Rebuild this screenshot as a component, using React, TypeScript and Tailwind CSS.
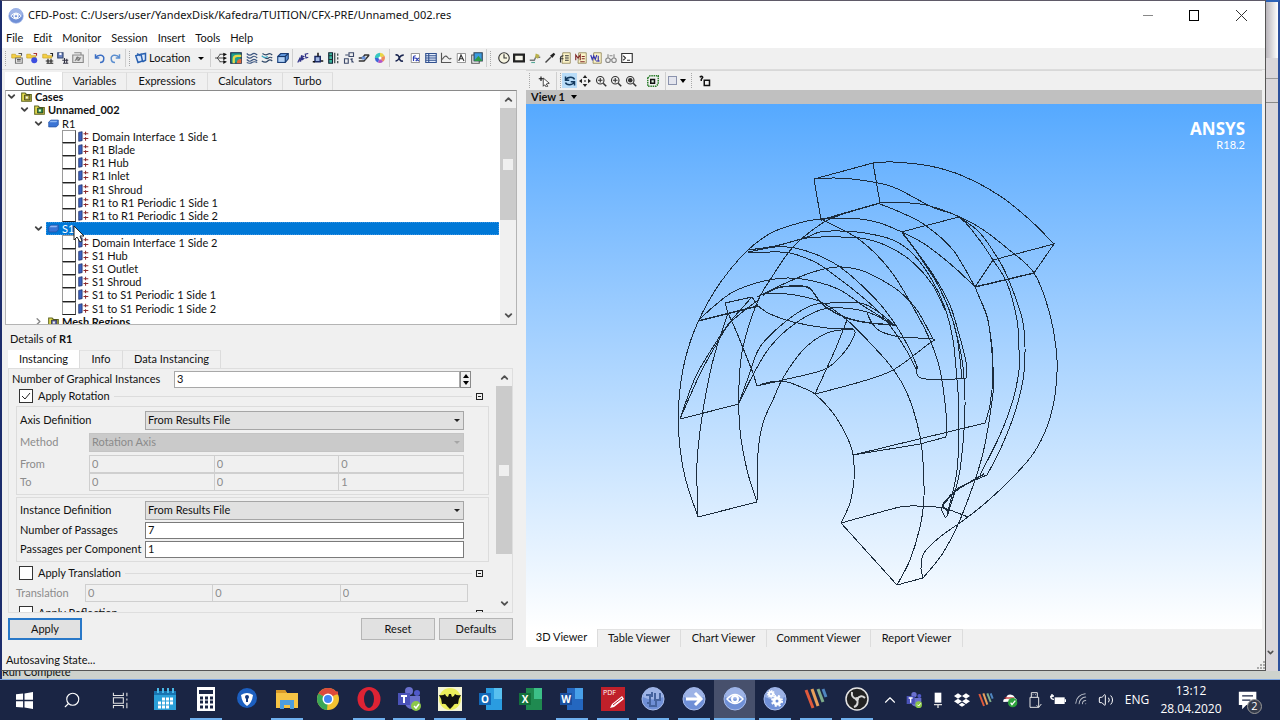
import React from 'react';
import { ChevronDown, ChevronRight, ChevronUp, Search, Wifi, Volume2 } from 'lucide-react';

type Pt = [number, number];

// Turns a list of points into a smooth cubic path
const smooth = (pts: Pt[]) => {
  let d = `M${pts[0][0]} ${pts[0][1]}`;
  for (let i = 0; i < pts.length - 1; i++) {
    const a = pts[Math.max(i - 1, 0)];
    const b = pts[i];
    const c = pts[i + 1];
    const e = pts[Math.min(i + 2, pts.length - 1)];
    d += `C${b[0] + (c[0] - a[0]) / 6} ${b[1] + (c[1] - a[1]) / 6} ${c[0] - (e[0] - b[0]) / 6} ${c[1] - (e[1] - b[1]) / 6} ${c[0]} ${c[1]}`;
  }
  return d;
};

const curves: Pt[][] = [
  [[873, 163], [893, 162], [930, 166], [963, 176], [1000, 196], [1030, 220], [1054, 244]],
  [[814, 179], [835, 178], [860, 180], [893, 187], [932, 207], [959, 217], [978, 238], [993, 260], [1007, 283], [1017, 320], [1019, 350], [1019, 370], [1013, 400], [1000, 435], [980, 475]],
  [[959, 217], [980, 233], [1000, 262], [1010, 283], [1022, 318], [1025, 347], [1023, 380], [1014, 415], [1000, 450], [987, 475]],
  [[880, 203], [910, 203], [930, 206], [960, 217], [982, 229], [1008, 249], [1034, 273], [1050, 315], [1057, 360], [1055, 395], [1047, 427], [1033, 454], [1013, 477], [990, 499], [968, 517], [940, 537], [924, 553], [921, 568], [923, 578]],
  [[880, 204], [902, 213], [925, 225], [953, 250], [975, 287]],
  [[902, 232], [918, 240], [933, 250], [955, 268], [975, 287]],
  [[902, 232], [920, 257], [938, 285], [950, 312], [958, 340], [963, 367], [965, 400], [964, 430], [960, 470], [955, 492], [948, 513]],
  [[903, 233], [932, 273], [949, 303], [957, 327], [966, 362], [966, 378]],
  [[903, 234], [930, 271], [948, 307], [957, 337], [962, 378]],
  [[975, 287], [987, 317], [992, 347], [993, 375], [990, 405], [985, 423]],
  [[976, 290], [988, 320], [993, 367], [993, 393], [982, 457], [960, 520], [943, 553], [923, 578]],
  [[823, 220], [860, 240], [890, 270], [913, 307], [930, 340], [940, 370], [946, 413], [946, 437]],
  [[902, 232], [880, 223], [860, 219], [840, 218], [821, 219], [803, 222], [773, 232], [748, 250], [720, 283], [698, 322], [685, 360], [679, 400], [679, 437], [685, 477], [698, 517]],
  [[840, 215], [821, 224], [793, 247], [770, 280], [757, 303], [743, 347], [739, 385], [740, 430], [747, 470], [757, 502]],
  [[748, 252], [780, 245], [807, 237], [820, 232], [840, 231], [865, 233], [893, 240], [913, 254], [932, 280], [945, 308], [953, 340], [957, 380], [959, 413], [957, 470], [947, 515]],
  [[748, 250], [775, 246], [807, 238], [830, 237], [860, 238], [885, 245], [910, 260], [932, 284], [945, 310]],
  [[748, 252], [775, 247], [795, 248], [815, 254], [837, 265], [857, 281], [880, 304], [897, 327], [910, 350], [918, 369]],
  [[748, 253], [770, 252], [790, 253], [815, 262], [837, 277], [860, 295], [880, 313], [896, 334], [908, 353], [916, 369]],
  [[698, 321], [713, 307], [733, 292], [760, 282], [787, 278], [813, 281], [840, 290], [865, 307], [893, 324]],
  [[757, 386], [770, 382], [787, 382], [803, 388], [815, 394], [833, 413], [847, 437], [853, 455], [854, 480], [850, 503], [841, 523]],
  [[841, 523], [870, 515], [900, 507], [917, 506], [943, 508], [968, 517]],
  [[897, 585], [910, 560], [920, 527], [924, 497], [922, 450], [917, 423], [907, 393], [893, 369], [873, 346], [847, 320], [823, 303], [805, 297], [787, 294], [763, 294]],
  [[758, 306], [770, 314], [793, 322], [827, 328], [853, 329], [852, 340], [840, 357], [823, 370], [783, 380], [757, 386]],
  [[867, 313], [872, 323], [880, 331], [900, 337], [933, 339], [927, 345], [893, 370], [860, 382], [815, 394]],
  [[933, 339], [917, 310], [900, 292], [880, 279], [860, 270], [837, 267], [810, 273], [777, 287], [757, 297]],
  [[853, 329], [827, 333], [803, 350], [783, 378], [773, 400], [763, 423], [758, 453], [757, 502]],
  [[739, 403], [748, 378], [760, 347], [785, 322], [810, 306], [830, 303], [860, 303], [877, 311], [893, 324]],
  [[739, 403], [754, 373], [770, 347], [793, 325], [820, 310], [843, 308], [870, 313], [893, 325]],
  [[680, 419], [695, 378], [713, 347], [730, 322], [752, 297]],
  [[680, 419], [700, 374], [716, 345], [731, 322], [758, 300]],
  [[728, 313], [715, 353], [709, 378], [702, 417], [697, 463], [698, 517]],
  [[916, 367], [917, 374], [921, 378], [940, 380], [966, 378]],
  [[987, 475], [960, 487], [950, 497], [942, 507], [943, 513], [947, 516], [955, 490]],
];

const heavy: Pt[][] = [
  [[763, 295], [777, 288], [793, 286], [807, 287], [813, 292], [823, 305], [847, 318], [870, 323], [895, 325]],
  [[984, 474], [960, 488], [951, 495], [943, 505], [948, 511]],
];

const segments =
  'M814 179L873 163L880 203M814 179L821 220M993 260L1054 244L1034 273M993 260L975 287M901 232L959 217' +
  'M853 455L985 423M853 455L920 444L946 437M698 517L757 502M841 523L897 585L923 578M680 419L739 404' +
  'M758 306L752 297L725 303L728 313L737 333L753 373L757 386M847 320L836 348L815 394';

const Wireframe = () => (
  <svg viewBox="526 104 736 525" preserveAspectRatio="xMidYMin meet" className="block h-full w-full" fill="none" stroke="#1c2c3c" strokeWidth="1" shapeRendering="crispEdges">
    {curves.map((c, i) => <path key={i} d={smooth(c)} />)}
    {heavy.map((c, i) => <path key={i} d={smooth(c)} strokeWidth="1.4" />)}
    <path d={segments} />
    <path d="M821 220L880 203M975 287L1034 273M698 321L758 306" strokeWidth="1.4" />
  </svg>
);

const Ico: React.FC<{ children: React.ReactNode; className?: string }> = ({ children, className = 'h-[12px] w-[12px]' }) => (
  <svg viewBox="0 0 16 16" className={`shrink-0 ${className}`} fill="none" strokeWidth="1.5">{children}</svg>
);

const folder = <path d="M1 3h5l1 2h6v3H1z" fill="#f5cf45" stroke="#c9a52c" strokeWidth="1" />;
const sheet = <path d="M3 2h11v12H3z" fill="#fff" stroke="#777" strokeWidth="1" />;

const fileIcons = [
  <>{folder}<path d="M6 8h9v7H6z" fill="#eee" stroke="#777" /><path d="M8 10h5M8 12h5M10 2h4v3" stroke="#555" /></>,
  <>{folder}<circle cx="11" cy="11" r="4" fill="#3d4ee0" /><path d="M10 2h4v3" stroke="#a33" /></>,
  <>{folder}<path d="M5 12h10M6 15h9M8 9v6M12 9v6M11 2h3v4" stroke="#222" /></>,
  <><path d="M1 1h7v7H1z" fill="#6e86c4" stroke="#33466f" /><path d="M3 1h3v3H3z" fill="#fff" /><path d="M7 11h8M8 15h7M10 8v7M13 9v6" stroke="#334" /></>,
  <><path d="M1 4h14v10H1z" fill="#e2e2e2" stroke="#888" /><path d="M3 1h9v3M4 12l3-5 2 4 3-4" stroke="#888" /><circle cx="8" cy="9" r="2" stroke="#777" /></>,
];
const undoIcons = [
  <path d="M2 3v5h5M2 8c4-6 12-4 11 1 0 3-2 5-5 5" stroke="#3c6fc4" strokeWidth="2" />,
  <path d="M14 3v5H9M14 8C10 2 2 4 3 9c0 3 2 5 5 5" stroke="#5c8fd0" strokeWidth="2" />,
];
const locationIcon = <path d="M1 5l7-2 2 9-6 2zM8 3l6-1v9l-4 2M3 2l4 3" fill="#dbe8fb" stroke="#2a61b0" strokeWidth="2" />;
const plotIcons = [
  <><path d="M0 8h12M6 3h6M6 13h6M3 8l4-5M3 8l4 5" stroke="#222" strokeWidth="1" /><path d="M11 1l5 2-5 3zM11 6l5 2-5 3zM11 11l5 2-5 3z" fill="#111" /></>,
  <><path d="M1 1h14v14H1z" fill="#1f9e8f" stroke="#124" /><path d="M5 15V9q0-4 5-4h5" stroke="#e7d94a" strokeWidth="3" /><path d="M9 15q0-6 6-6v6z" fill="#e06a3a" /></>,
  <path d="M1 2q4 4 7 1t7 1M1 6q4 4 7 1t7 1M1 10q4 4 7 1t7 1M1 14q4 2 7 0t7 0" stroke="#3c5680" />,
  <><path d="M2 2q4 3 7 1t6 1M4 7q4 3 6 1t5 0M1 12q5 3 8 0t6 0" stroke="#2e4666" /><path d="M1 5q4 4 8 1" stroke="#34a4c0" /></>,
  <><path d="M1 6l4-4h10v7l-4 5H1z" fill="#5d93d8" stroke="#1c3f78" /><path d="M1 6h10l4-4M11 6v8" stroke="#173666" /><path d="M2 7h8v6H2z" fill="#b4d0f1" /></>,
];
const insertIcons = [
  <path d="M1 14l3-6 1 5M2 12h3M6 11V5l3 1-3 2 3 1-3 2M15 2l-4 1 1 5 3-1" stroke="#2d2f86" />,
  <><path d="M4 6h7v7H4z" fill="#9fb6e2" stroke="#1c2b66" strokeWidth="2" /><path d="M1 13h3M8 1v5M12 12h3" stroke="#111" strokeWidth="2" /></>,
  <><path d="M1 1h5v14H1z" fill="#3ab89f" stroke="#123" /><path d="M1 5h5M1 10h5M9 1v14M13 2v3M13 7v3M13 12v3" stroke="#233" /></>,
  <path d="M2 15V9h5v6zM8 1h6v5H8zM3 4h4M10 9l4 5M12 8v6" stroke="#3d4a6a" />,
  <><path d="M1 8h5l3-4h6M1 12h7l7-8" stroke="#333" strokeWidth="2" /><path d="M5 6h5v4H5z" fill="#6991d8" /></>,
  <><path d="M8 8V1a7 7 0 0 1 6 4z" fill="#e8d548" /><path d="M8 8l6-3a7 7 0 0 1-2 8z" fill="#ef8b5c" /><path d="M8 8l4 5a7 7 0 0 1-7 1z" fill="#b455c4" /><path d="M8 8l-3 6a7 7 0 0 1-4-6z" fill="#3c66d8" /><path d="M8 8H1a7 7 0 0 1 7-7z" fill="#3ac8c0" /><circle cx="8" cy="8" r="2" fill="#fff" /></>,
];
const dataIcons = [
  <path d="M2 4q4-1 5 4t5 4M13 4q-4 0-6 4t-5 4" stroke="#1a2550" strokeWidth="2" />,
  <>{sheet}<path d="M6 12V7q0-2 3-2M5 8h4M9 8l4 4M13 8l-4 4" stroke="#2a3bb0" /></>,
  <><path d="M1 2h14v12H1z" fill="#e5edfb" stroke="#31518f" /><path d="M1 5h14M1 8h14M1 11h14M5 2v12" stroke="#31518f" /></>,
  <path d="M2 1v13h13M3 10q4-7 7-3t5 1" stroke="#555" />,
  <>{sheet}<path d="M5 12l3-8 4 8M6 9h5" stroke="#333" /></>,
  <><path d="M1 4h10v11H1z" fill="#fff" stroke="#555" /><path d="M4 1h11v11H4z" fill="#3b9be0" stroke="#345" /><path d="M4 12l6-7 5 7z" fill="#2e9b48" /></>,
];
const calcSheet = <path d="M5 1h10v14H4z" fill="#fbf3c8" stroke="#86794a" strokeWidth="1" />;
const toolIcons = [
  <><circle cx="8" cy="8" r="7" fill="#f6f4e0" stroke="#333" /><path d="M8 3v5h4" stroke="#333" /></>,
  <><path d="M0 2h16v12H0z" fill="#222" /><path d="M3 5h10v6H3z" fill="#f4f4ea" /></>,
  <><path d="M1 11h6l2-4h6" stroke="#777" strokeWidth="2" /><path d="M9 2l5 2-2 5-4-2z" fill="#b8b04c" /><path d="M3 14h5" stroke="#5a9" /></>,
  <><path d="M2 14l7-7" stroke="#444" strokeWidth="2" /><path d="M8 5l3 3 4-5-2-2z" fill="#222" /></>,
  <>{calcSheet}<path d="M2 14V8q0-3 4-3M1 9h5M8 5h5M8 8h5M8 11h5" stroke="#333" /></>,
  <>{calcSheet}<path d="M1 11V4l3 4 3-4v7M9 6h4M9 9h4M7 13h6" stroke="#802828" /></>,
  <>{calcSheet}<path d="M1 4l2 6 2-5 2 5 2-6M8 12h5M11 5v8" stroke="#3333b0" /></>,
  <><circle cx="4" cy="11" r="3" stroke="#888" /><circle cx="12" cy="11" r="3" stroke="#888" /><path d="M4 8V3M12 8V3M7 10h2M6 5h4" stroke="#888" /></>,
  <><path d="M1 2h14v12H1z" fill="#fff" stroke="#333" /><path d="M3 5l3 3-3 3M8 11h4" stroke="#333" /></>,
];
const magnifier = <><circle cx="7" cy="7" r="5" stroke="#333" /><path d="M11 11l4 4" stroke="#333" strokeWidth="2" /></>;
const viewIcons = [
  <path d="M2 2v5h5M2 7q2-4 7-4 4 0 5 3M14 14V9H9M14 9q-2 4-7 4-4 0-5-3" stroke="#12395e" strokeWidth="2" />,
  <path d="M8 0l3 4H5zM8 16l3-4H5zM0 8l4-3v6zM16 8l-4-3v6zM7 7h2v2H7z" fill="#222" />,
  <>{magnifier}<path d="M4 7h6M7 4v6" stroke="#333" /></>,
  <>{magnifier}<path d="M4 7h6M7 4v6" stroke="#333" /></>,
  <>{magnifier}<circle cx="7" cy="7" r="3" fill="#333" /></>,
];

const Group: React.FC<{ icons: React.ReactNode[]; name: string; className: string }> = ({ icons, name, className }) => (
  <div className={`flex shrink-0 ${className}`}>
    {icons.map((icon, i) => (
      <button key={i} aria-label={`${name} ${i + 1}`} className="flex flex-1 items-center justify-center">
        <Ico>{icon}</Ico>
      </button>
    ))}
  </div>
);

const Sep = () => <span className="mx-[2px] h-[18px] w-px shrink-0 bg-[#cfcfcf]" />;
const Grip = () => <span className="mx-px h-[15px] shrink-0 border-l border-dotted border-[#a8a8a8]" />;

const Tab: React.FC<{ label: string; active?: boolean; className?: string }> = ({ label, active, className = '' }) => (
  <button
    role="tab"
    aria-selected={!!active}
    className={`h-full shrink-0 border-r border-[#dcdcdc] text-center ${active ? 'bg-white' : 'border-t border-t-[#e2e2e2]'} ${className}`}
  >
    {label}
  </button>
);

const boundary = (
  <Ico className="mr-[3px] ml-[2px] h-[11px] w-[11px]">
    <path d="M1 2l5-1v13l-5 1z" fill="#3b62c0" stroke="#14255c" strokeWidth="1" />
    <path d="M8 4h7M8 11h7M11 1v5M11 9v5" stroke="#8d2a2a" />
  </Ico>
);
const solid = (
  <Ico className="mr-[3px] h-[11px] w-[11px]">
    <path d="M1 6l3-3h11v7l-3 3H1z" fill="#3b74d4" stroke="#2450a0" strokeWidth="1" />
    <path d="M4 4h10l-2 2H2z" fill="#8eb6f2" />
  </Ico>
);
const caseIcon = (fill: string) => (
  <Ico className="mr-[3px] h-[11px] w-[11px]">
    <path d="M1 3h5l2 2h7v10H1z" fill="#e8df4e" stroke="#5d6420" />
    <path d="M5 6h8v7H5z" fill={fill} stroke="#222" strokeWidth="1" />
    <path d="M7 8h3v3H7z" fill="#f7f7e0" />
  </Ico>
);

const Leaf: React.FC<{ label: string }> = ({ label }) => (
  <label className="flex items-center pl-[56px]">
    <input type="checkbox" className="h-full w-[14px] appearance-none border border-[#9a9a9a] border-b-[#222] border-r-[#555] bg-white" />
    {boundary}
    {label}
  </label>
);

const r1 = ['Domain Interface 1 Side 1', 'R1 Blade', 'R1 Hub', 'R1 Inlet', 'R1 Shroud', 'R1 to R1 Periodic 1 Side 1', 'R1 to R1 Periodic 1 Side 2'];
const s1 = ['Domain Interface 1 Side 2', 'S1 Hub', 'S1 Outlet', 'S1 Shroud', 'S1 to S1 Periodic 1 Side 1', 'S1 to S1 Periodic 1 Side 2'];
const arrow = <ChevronDown className="mr-[4px] h-[11px] w-[11px] shrink-0" strokeWidth={4} color="#444" />;

const Scrollbar: React.FC<{ thumb: string }> = ({ thumb }) => (
  <div className="flex w-[16px] shrink-0 flex-col items-center bg-[#f0f0f0]">
    <ChevronUp className="my-[3px] h-[11px] w-[11px] shrink-0" strokeWidth={4} color="#505050" />
    <div className={`flex w-full items-center justify-center bg-[#cbcbcb] ${thumb}`}>
      <span className="h-[11px] w-[10px] bg-[#efefef]" />
    </div>
    <ChevronDown className="mt-auto mb-[3px] h-[11px] w-[11px] shrink-0" strokeWidth={4} color="#505050" />
  </div>
);

const Tree = () => (
  <div className="flex min-h-0 flex-1 overflow-hidden border border-[#b4b4b4] border-t-[#8a8a8a] bg-white">
    <div className="min-h-0 flex-1 overflow-hidden">
      <div className="-mt-[1px] grid h-[238px] auto-rows-fr leading-[13px]">
        <div className="flex items-center font-bold">{arrow}{caseIcon('#a9a13c')}Cases</div>
        <div className="flex items-center pl-[13px] font-bold">{arrow}{caseIcon('#2c8c46')}Unnamed_002</div>
        <div className="flex items-center pl-[27px]">{arrow}{solid}R1</div>
        {r1.map((l) => <Leaf key={l} label={l} />)}
        <div className="flex items-center pl-[27px]">
          {arrow}
          <div className="relative mr-[1px] -ml-[2px] flex h-full flex-1 items-center border border-dotted border-[#3a95e4] bg-[#0078d7] pl-[1px] text-white">
            {solid}S1
            <svg viewBox="0 0 12 18" className="absolute top-[2px] left-[26px] z-10 h-[18px] w-[12px]">
              <path d="M1 1v14l3-3 3 5 2-1-2-5h4z" fill="#fff" stroke="#222" />
            </svg>
          </div>
        </div>
        {s1.map((l) => <Leaf key={l} label={l} />)}
        <div className="flex items-center pl-[27px] font-bold">
          <ChevronRight className="mr-[4px] h-[11px] w-[11px]" strokeWidth={3} color="#888" />
          {caseIcon('#5c63a8')}Mesh Regions
        </div>
      </div>
    </div>
    <Scrollbar thumb="h-[112px]" />
  </div>
);

const Drop: React.FC<{ id: string; value: string; disabled?: boolean }> = ({ id, value, disabled }) => (
  <div className="relative flex-1">
    <select
      id={id}
      disabled={disabled}
      className={`block h-[19px] w-full appearance-none border px-[2px] ${disabled ? 'border-[#c4c4c4] bg-[#cacaca] text-[#8a8a8a]' : 'border-[#a6a6a6] bg-[#e1e1e1]'}`}
    >
      <option>{value}</option>
    </select>
    <span className={`pointer-events-none absolute top-[8px] right-[4px] border-x-[3px] border-t-[3px] border-x-transparent ${disabled ? 'border-t-[#a5a5a5]' : 'border-t-[#222]'}`} />
  </div>
);

const Triple: React.FC<{ label: string; values: string[]; labelClass: string }> = ({ label, values, labelClass }) => (
  <div className="flex h-[18px] items-center text-[#8c8c8c]">
    <span className={`shrink-0 ${labelClass}`}>{label}</span>
    {values.map((v, i) => (
      <input key={i} aria-label={`${label} ${i + 1}`} disabled defaultValue={v} className="h-full w-0 flex-1 border border-r-0 border-[#cfcfcf] bg-[#f0f0f0] px-[2px] pb-[2px] last:border-r" />
    ))}
  </div>
);

const Toggle: React.FC<{ label: string; checked?: boolean }> = ({ label, checked }) => (
  <div className="flex h-[16px] items-center gap-[4px] pr-[6px] pl-[3px]">
    <label className="flex items-center gap-[5px]">
      <span className="relative h-[14px] w-[14px]">
        <input type="checkbox" defaultChecked={checked} className="block h-full w-full appearance-none border border-[#333] bg-white" />
        {checked && <svg viewBox="0 0 14 14" className="pointer-events-none absolute inset-0"><path d="M3 7l3 3 5-6" fill="none" stroke="#222" /></svg>}
      </span>
      {label}
    </label>
    <span className="h-px flex-1 bg-[#dcdcdc]" />
    <button aria-label={`Collapse ${label}`} className="flex h-[7px] w-[7px] items-center justify-center border border-[#222]">
      <span className="h-px w-[3px] bg-[#222]" />
    </button>
  </div>
);

const Details = () => (
  <div className="shrink-0 pt-[7px] pr-[4px] pb-[7px] pl-[3px]">
    <div className="pl-[2px] leading-[14px]">Details of <b>R1</b></div>
    <div role="tablist" className="mt-[4px] flex h-[18px]">
      <Tab label="Instancing" active className="w-[72px]" />
      <Tab label="Info" className="w-[43px]" />
      <Tab label="Data Instancing" className="w-[98px]" />
    </div>
    <div className="flex h-[245px] overflow-hidden border border-[#dedede]">
      <div className="min-w-0 flex-1 overflow-hidden pt-[2px] pr-[7px] pl-[3px]">
        <div className="flex h-[17px] items-center pr-[18px]">
          <label htmlFor="instances" className="w-[162px] shrink-0">Number of Graphical Instances</label>
          <input id="instances" defaultValue="3" className="h-full w-0 flex-1 border border-[#a8a8a8] bg-white px-[2px] pb-[2px]" />
          <div className="flex h-full w-[11px] flex-col border border-[#8a8a8a] bg-[#f0f0f0]">
            <button aria-label="More" className="flex flex-1 items-center justify-center"><span className="border-x-[3px] border-b-[4px] border-x-transparent border-b-black" /></button>
            <button aria-label="Fewer" className="flex flex-1 items-center justify-center"><span className="border-x-[3px] border-t-[4px] border-x-transparent border-t-black" /></button>
          </div>
        </div>
        <div className="pl-[4px]">
          <Toggle label="Apply Rotation" checked />
          <div className="mt-[2px] flex flex-col gap-[3px] border border-[#dcdcdc] pt-[4px] pr-[24px] pb-[3px] pl-[3px]">
            <div className="flex items-center"><label htmlFor="axis" className="w-[125px]">Axis Definition</label><Drop id="axis" value="From Results File" /></div>
            <div className="flex items-center text-[#8c8c8c]"><label htmlFor="method" className="w-[69px]">Method</label><Drop id="method" value="Rotation Axis" disabled /></div>
            <div>
              <Triple label="From" values={['0', '0', '0']} labelClass="w-[69px]" />
              <Triple label="To" values={['0', '0', '1']} labelClass="w-[69px]" />
            </div>
          </div>
          <div className="mt-[2px] flex flex-col gap-[2px] border border-[#dcdcdc] py-[3px] pr-[24px] pl-[3px]">
            <div className="flex items-center"><label htmlFor="inst" className="w-[125px]">Instance Definition</label><Drop id="inst" value="From Results File" /></div>
            <div className="flex items-center"><label htmlFor="passages" className="w-[125px]">Number of Passages</label><input id="passages" defaultValue="7" className="h-[17px] w-0 flex-1 border border-[#7a7a7a] bg-white px-[2px] pb-[2px]" /></div>
            <div className="flex items-center"><label htmlFor="per" className="w-[125px] whitespace-nowrap">Passages per Component</label><input id="per" defaultValue="1" className="h-[17px] w-0 flex-1 border border-[#7a7a7a] bg-white px-[2px] pb-[2px]" /></div>
          </div>
          <div className="mt-[3px] flex flex-col gap-[3px]">
            <Toggle label="Apply Translation" />
            <div className="pr-[21px]"><Triple label="Translation" values={['0', '0', '0']} labelClass="w-[69px]" /></div>
            <Toggle label="Apply Reflection" />
          </div>
        </div>
      </div>
      <Scrollbar thumb="h-[168px]" />
    </div>
    <div className="mt-[5px] flex h-[22px] gap-[4px]">
      <button className="w-[74px] border-2 border-[#2878c8] bg-[#e1e1e1]">Apply</button>
      <button className="ml-auto w-[74px] border border-[#b5b5b5] bg-[#e1e1e1]">Reset</button>
      <button className="w-[74px] border border-[#b5b5b5] bg-[#e1e1e1]">Defaults</button>
    </div>
  </div>
);

const Viewer = () => (
  <div className="flex min-w-0 flex-1 flex-col pr-[3px] pl-[5px]">
    <div className="flex h-[20px] shrink-0 items-center border-t border-[#d8d8d8] pl-[2px]">
      <Grip />
      <button aria-label="Select" className="mr-[4px] ml-[7px]"><Ico><path d="M1 5h6M4 2v6" stroke="#111" /><path d="M7 4l8 7-4 1 2 3-2 1-2-3-2 2z" fill="#fff" stroke="#111" strokeWidth="1" /></Ico></button>
      <Sep /><Grip />
      <Group icons={viewIcons} name="View" className="h-[15px] w-[77px] [&>button:first-child]:bg-[#b8dcf8]" />
      <button aria-label="Highlight" className="mr-[4px] ml-[8px]"><Ico><path d="M1 4l3-3h11v11l-3 3H1z" stroke="#2b7d2b" strokeDasharray="2 1" strokeWidth="2" /><path d="M5 6h5v5H5z" fill="#dff0df" stroke="#111" strokeWidth="2" /></Ico></button>
      <Sep />
      <button aria-label="Layout" className="flex items-center gap-[3px]">
        <span className="h-[9px] w-[9px] border border-[#8b93ad] bg-[#e3e5ee]" />
        <span className="border-x-[3px] border-t-[4px] border-x-transparent border-t-black" />
      </button>
      <span className="w-[4px]" /><Grip />
      <button aria-label="Help" className="ml-[6px]"><Ico><path d="M1 3q3-3 4 0L3 6v2M7 7h7v7H7z" stroke="#111" strokeWidth="2" /></Ico></button>
    </div>
    <button className="flex h-[14px] shrink-0 items-center gap-[6px] bg-[#c0c0c0] pl-[5px] font-bold">
      View 1
      <span className="border-x-[3px] border-t-[4px] border-x-transparent border-t-black" />
    </button>
    <div className="relative min-h-0 flex-1 bg-linear-to-b from-[#55a9ff] to-white">
      <Wireframe />
      <div className="absolute top-[15px] right-[17px] text-right text-white">
        <div className="font-['Open_Sans'] text-[17px] leading-[20px] font-bold">ANSYS</div>
        <div className="text-[11px] leading-[12px]">R18.2</div>
      </div>
    </div>
    <div role="tablist" className="flex h-[18px] shrink-0">
      <Tab label="3D Viewer" active className="w-[72px] pb-[2px]" />
      <Tab label="Table Viewer" className="w-[83px] pb-[2px]" />
      <Tab label="Chart Viewer" className="w-[86px] pb-[2px]" />
      <Tab label="Comment Viewer" className="w-[104px] pb-[2px]" />
      <Tab label="Report Viewer" className="w-[92px] pb-[2px]" />
    </div>
  </div>
);

const Orb: React.FC<{ children: React.ReactNode; className?: string }> = ({ children, className = 'h-[24px] w-[24px]' }) => (
  <svg viewBox="0 0 24 24" className={className} fill="none" stroke="#fff" strokeWidth="2">
    <circle cx="12" cy="12" r="11" fill="#6f8fd6" stroke="#a9bdec" strokeWidth="1" />
    <path d="M2 10a10 10 0 0 1 20 0q-10 5-20 0z" fill="#9db3e6" stroke="none" />
    {children}
  </svg>
);
const eye = <><path d="M4 12q8-9 16 0q-8 9-16 0z" strokeWidth="1.5" /><circle cx="12" cy="12" r="3" /></>;

const Art: React.FC<{ children: React.ReactNode; className?: string }> = ({ children, className = 'h-[24px] w-[24px]' }) => (
  <svg viewBox="0 0 24 24" className={className} fill="none">{children}</svg>
);
const teams = (
  <>
    <circle cx="12" cy="4" r="4" fill="#6a70cf" /><circle cx="20" cy="6" r="3" fill="#5059c9" />
    <path d="M8 9h15v8q-3 5-8 5t-7-5z" fill="#6970cc" /><path d="M1 6h12v12H1z" fill="#4a52b8" />
    <path d="M4 9h6M7 9v7" stroke="#fff" strokeWidth="2" />
    <circle cx="19" cy="19" r="5" fill="#8cc84a" /><path d="M17 19l2 2 3-4" stroke="#fff" strokeWidth="1.5" />
  </>
);
const stripes = (
  <>
    <path d="M2 3l7 18" stroke="#e05a3c" strokeWidth="3" /><path d="M8 2l6 17" stroke="#e8a05c" strokeWidth="3" />
    <path d="M14 2l5 13" stroke="#7fae8c" strokeWidth="3" /><path d="M19 2l3 8" stroke="#4f86c0" strokeWidth="3" />
  </>
);
const Office: React.FC<{ letter: string; tones: [string, string, string] }> = ({ letter, tones }) => (
  <Art>
    <path d="M7 1h16v22H7z" fill={tones[0]} /><path d="M15 1h8v11h-8z" fill={tones[1]} />
    <path d="M0 6h12v12H0z" fill={tones[2]} />
    <text x="6" y="16" textAnchor="middle" fontSize="10" fontWeight="bold" fill="#fff">{letter}</text>
  </Art>
);

const apps: { name: string; icon: React.ReactNode; open?: boolean; active?: boolean }[] = [
  { name: 'Calendar', icon: <Art><path d="M1 4h22v19H1z" fill="#2a9fd8" /><path d="M1 4h22v4H1z" fill="#1874b0" /><path d="M5 1v5M10 1v5M15 1v5M20 1v5" stroke="#49b8e8" strokeWidth="2" /><path d="M9 12h12M5 16h15M5 20h11" stroke="#fff" strokeWidth="3" strokeDasharray="3 1" /></Art> },
  { name: 'Calculator', open: true, icon: <Art><path d="M3 0h18v24H3z" fill="#fff" /><path d="M5 3h14v4H5z" fill="#1a2544" /><path d="M6 11h13M6 15h13M6 20h13" stroke="#1a2544" strokeWidth="3" strokeDasharray="3 2" /></Art> },
  { name: 'VPN', icon: <Art><circle cx="12" cy="11" r="10" fill="#1c5fc0" /><path d="M6 8q6-4 12 0-1 8-6 11Q7 16 6 8z" fill="#fff" /><circle cx="12" cy="10" r="2" fill="#163a80" /><path d="M12 10v5" stroke="#163a80" strokeWidth="2" /></Art> },
  { name: 'Explorer', open: true, icon: <Art><path d="M1 3h9l2 3h11v15H1z" fill="#f6c445" /><path d="M1 3h9l2 3H1z" fill="#d89a28" /><path d="M5 22v-9h14v9h-4v-4H9v4z" fill="#4c9de0" /></Art> },
  { name: 'Chrome', icon: <Art><circle cx="12" cy="12" r="11" fill="#f2c230" /><path d="M12 12L2.500 6.500A11 11 0 0 1 21.500 6.500z" fill="#dd4a3c" /><path d="M12 12L2.500 6.500A11 11 0 0 0 11 23z" fill="#3aa757" /><path d="M12 6h10" stroke="#dd4a3c" strokeWidth="3" /><circle cx="12" cy="12" r="5.500" fill="#fff" /><circle cx="12" cy="12" r="4" fill="#4285f4" /></Art> },
  { name: 'Opera', open: true, icon: <Art><ellipse cx="12" cy="12" rx="11.500" ry="12" fill="#dd2334" /><ellipse cx="12" cy="12" rx="5" ry="9" fill="#1a2544" /></Art> },
  { name: 'Teams', open: true, icon: <Art>{teams}</Art> },
  { name: 'Bat', open: true, icon: <Art><path d="M0 0h24v24H0z" fill="#f4f4d8" /><circle cx="12" cy="12" r="11" fill="#ecee5c" /><path d="M1 8q4 1 6-1 1 3 3 3l1-3h2l1 3q2 0 3-3 2 2 6 1-3 4-3 9-4-1-5 2l-3 3-3-3q-1-3-5-2 0-5-3-9z" fill="#111" /></Art> },
  { name: 'Outlook', icon: <Office letter="O" tones={['#2a9ce0', '#58c0f0', '#1268b8']} /> },
  { name: 'Excel', icon: <Office letter="X" tones={['#1f8a50', '#3cc088', '#12713c']} /> },
  { name: 'Word', open: true, icon: <Office letter="W" tones={['#2467c0', '#48a0ea', '#1a4fa0']} /> },
  { name: 'PDF', open: true, icon: <Art><path d="M0 0h24v24H0z" fill="#c0202a" /><text x="2" y="8" fontSize="7" fill="#fff">PDF</text><path d="M9 21l2-4 10-8 2 3-10 8z" fill="#fff" /><path d="M12 18l9-7" stroke="#c0202a" /></Art> },
  { name: 'Workbench', open: true, icon: <Orb><path d="M5 8h4v8H6M14 6v7h5V6M9 17v2h6v-5M11 5v5" stroke="#45639f" /></Orb> },
  { name: 'Solver', open: true, icon: <Orb><path d="M4 12h14M13 6l6 6-6 6" strokeWidth="3" /></Orb> },
  { name: 'CFD-Post', open: true, active: true, icon: <Orb>{eye}</Orb> },
  { name: 'CFX-Pre', open: true, icon: <Orb><circle cx="14" cy="14" r="3" strokeWidth="3" /><circle cx="14" cy="14" r="5" strokeDasharray="2 2" /><circle cx="8" cy="7" r="2" /><circle cx="8" cy="7" r="3" strokeDasharray="1 1" /></Orb> },
  { name: 'Stripes', open: true, icon: <Art>{stripes}</Art> },
  { name: 'OBS', open: true, icon: <Art><circle cx="12" cy="12" r="11" fill="#222" stroke="#e4e4e4" strokeWidth="1.500" /><path d="M12 12q-6-1-5-7M12 12q4-5 8-1M12 12q2 6-3 8" stroke="#d8d8d8" strokeWidth="2" /><circle cx="12" cy="12" r="2" fill="#d8d8d8" /></Art> },
];

const small = 'h-[16px] w-[16px]';
const tray: React.ReactNode[] = [
  <ChevronUp className="h-[18px] w-[18px]" strokeWidth={1.5} />,
  <Art className={small}>{teams}</Art>,
  <Art className={small}><path d="M7 1h10v15H7z" fill="#fff" /><path d="M6 19h12M12 19v5" stroke="#ddd" strokeWidth="2" /></Art>,
  <Art className={small}><path d="M6 2l6 4-6 4-6-4zM18 2l6 4-6 4-6-4zM6 10l6 4-6 4-6-4zM18 10l6 4-6 4-6-4zM12 16l5 3-5 3-5-3z" fill="#fff" /></Art>,
  <Art className={small}>{stripes}</Art>,
  <Art className={small}><path d="M2 15q-1-5 4-5 1-7 8-6 5 1 5 5 4 1 3 5z" fill="#fff" /><path d="M4 9h14" stroke="#c33" strokeWidth="2" /><circle cx="16" cy="16" r="7" fill="#2ca33c" /><path d="M13 16l2 3 5-6" stroke="#fff" strokeWidth="2" /></Art>,
  <Art className={small}><path d="M8 8V1h9v7M6 8h13v15H6zM10 4h1M14 4h1M16 20l3 3 4-5" stroke="#e4e4e4" strokeWidth="1.500" /></Art>,
  <Art className={small}><path d="M7 8h15v10H7z" fill="#fff" /><path d="M23 11v4M1 6h5M3 3v5M1 6q0 5 5 5" stroke="#fff" strokeWidth="2" /></Art>,
  <Wifi className="h-[16px] w-[16px] -rotate-45" strokeWidth={1.5} color="#b8bdc8" />,
  <Volume2 className="h-[16px] w-[16px]" strokeWidth={1.5} />,
];

const Taskbar = () => (
  <div className="flex h-[40px] shrink-0 items-stretch bg-[#1a2544] font-['Open_Sans',sans-serif] text-[12px] text-white">
    <button aria-label="Start" className="flex w-[48px] items-center justify-center">
      <Art className="h-[17px] w-[17px]"><path d="M0 3l10-1v9H0zM12 2l12-2v11H12zM0 13h10v9L0 21zM12 13h12v11l-12-2z" fill="#fff" /></Art>
    </button>
    <button aria-label="Search" className="flex w-[48px] items-center justify-center"><Search className="h-[18px] w-[18px] -scale-x-100" strokeWidth={1.5} /></button>
    <button aria-label="Task view" className="flex w-[49px] items-center justify-center">
      <Art className="h-[17px] w-[17px]"><path d="M2 1v4h14V1M2 23v-4h14v4M2 8h14v8H2zM21 1v5M21 9v3M21 15v8" stroke="#e4e4e4" strokeWidth="1.500" /></Art>
    </button>
    <div className="flex w-[732px] shrink-0">
      {apps.map((a) => (
        <button
          key={a.name}
          aria-label={a.name}
          className={`flex flex-1 flex-col items-center ${a.active ? 'bg-[#47506c]' : ''}`}
        >
          <span className="flex flex-1 items-center">{a.icon}</span>
          <span className={`h-[2px] ${a.active ? 'w-full' : 'w-[32px]'} ${a.open ? 'bg-[#6fb0ee]' : ''}`} />
        </button>
      ))}
    </div>
    <div className="ml-auto flex items-center">
      <div className="flex w-[240px]">
        {tray.map((t, i) => <span key={i} className="flex flex-1 items-center justify-center">{t}</span>)}
      </div>
      <span className="w-[38px] text-center">ENG</span>
      <time className="w-[70px] text-center leading-[18px]">13:12<br />28.04.2020</time>
      <button aria-label="Notifications" className="relative mr-[10px] flex h-full w-[44px] items-center justify-center">
        <Art className="h-[20px] w-[20px]"><path d="M1 2h21v16H10l-5 5v-5H1z" fill="#fff" /><path d="M5 7h13M5 12h10" stroke="#1a2544" strokeWidth="1.500" /></Art>
        <span className="absolute top-[19px] right-[8px] flex h-[15px] w-[15px] items-center justify-center rounded-full border border-[#999] bg-[#333a4a] text-[11px]">2</span>
      </button>
    </div>
  </div>
);

export default function App() {
  return (
    <div className="flex h-screen flex-col overflow-hidden bg-[#1a2544] font-['Lato',sans-serif] text-[11px] text-[#111]">
      <div className="flex min-h-0 flex-1 flex-col border-b border-[#7fa6e0] bg-[#cdd2cd]">
        <div className="flex min-h-0 flex-1">
          <div className="flex min-w-0 flex-1 flex-col border-t border-r border-b border-l-2 border-t-[#5f5a68] border-r-[#555] border-b-[#555] border-l-[#1c2c6c] bg-[#f0f0f0]">
            <header className="flex h-[29px] shrink-0 items-center bg-white pl-[6px]">
              <Orb className="mr-[4px] h-[16px] w-[16px]">{eye}</Orb>
              <span className="flex-1 font-['Noto_Sans',sans-serif]">CFD-Post: C:/Users/user/YandexDisk/Kafedra/TUITION/CFX-PRE/Unnamed_002.res</span>
              <button aria-label="Minimize" className="flex w-[46px] justify-center"><span className="h-px w-[10px] bg-[#888]" /></button>
              <button aria-label="Maximize" className="flex w-[46px] justify-center"><span className="h-[11px] w-[10px] border border-black" /></button>
              <button aria-label="Close" className="flex w-[48px] justify-center"><svg viewBox="0 0 11 11" className="h-[11px] w-[11px]"><path d="M0 0l11 11M11 0L0 11" stroke="#333" /></svg></button>
            </header>
            <nav className="flex h-[18px] shrink-0 items-center gap-[10px] bg-white pb-[2px] pl-[4px]">
              {['File', 'Edit', 'Monitor', 'Session', 'Insert', 'Tools', 'Help'].map((m) => <button key={m}>{m}</button>)}
            </nav>
            <div className="flex h-[22px] shrink-0 items-center border-b border-[#dcdcdc] pb-[1px] pl-[2px]">
              <Grip />
              <Group icons={fileIcons} name="File" className="ml-[2px] w-[77px]" />
              <Sep />
              <Group icons={undoIcons} name="Undo" className="ml-[1px] w-[31px]" />
              <Sep /><Grip />
              <button className="flex items-center gap-[2px] pl-[4px]">
                <Ico>{locationIcon}</Ico>Location
                <span className="mr-[4px] ml-[6px] border-x-[3px] border-t-[3px] border-x-transparent border-t-black" />
              </button>
              <Sep />
              <Group icons={plotIcons} name="Plot" className="w-[77px]" />
              <Sep />
              <Group icons={insertIcons} name="Insert" className="w-[92px]" />
              <Sep />
              <Group icons={dataIcons} name="Data" className="w-[92px]" />
              <Sep /><Grip />
              <Group icons={toolIcons} name="Tool" className="ml-[4px] w-[138px]" />
            </div>
            <div className="flex min-h-0 flex-1">
              <div className="flex w-[515px] shrink-0 flex-col pt-[2px] pl-[3px]">
                <div role="tablist" className="flex h-[18px] shrink-0">
                  <Tab label="Outline" active className="w-[58px]" />
                  <Tab label="Variables" className="w-[64px]" />
                  <Tab label="Expressions" className="w-[81px]" />
                  <Tab label="Calculators" className="w-[75px]" />
                  <Tab label="Turbo" className="w-[50px]" />
                </div>
                <Tree />
                <Details />
              </div>
              <span className="w-[4px] shrink-0" />
              <Viewer />
            </div>
            <footer className="flex h-[23px] shrink-0 items-center justify-between pt-[3px] pl-[4px]">
              Autosaving State...
              <svg viewBox="0 0 9 9" className="h-[9px] w-[9px] self-end"><path d="M7 1h2M4 4h5M1 7h8" stroke="#aaa" strokeWidth="2" strokeDasharray="2 1" /></svg>
            </footer>
          </div>
          <div className="flex w-[14px] shrink-0 flex-col border-t-2 border-r-2 border-t-[#2c62b8] border-r-[#2c4f9c] bg-[#d9d6da]">
            <div className="h-[56px] bg-linear-to-r from-[#b9b5bb] to-white" />
            <div className="mt-[20px] h-px bg-[#999]" />
            <div className="mt-[23px] h-px bg-[#888]" />
            <ChevronDown className="mt-auto mb-[14px] h-[9px] w-[9px]" strokeWidth={4} color="#505050" />
          </div>
        </div>
        <div className="flex h-[8px] shrink-0 flex-col justify-end overflow-hidden border-l-2 border-[#1c2c6c]">
          <span className="leading-[14px]">Run Complete</span>
        </div>
      </div>
      <Taskbar />
    </div>
  );
}
